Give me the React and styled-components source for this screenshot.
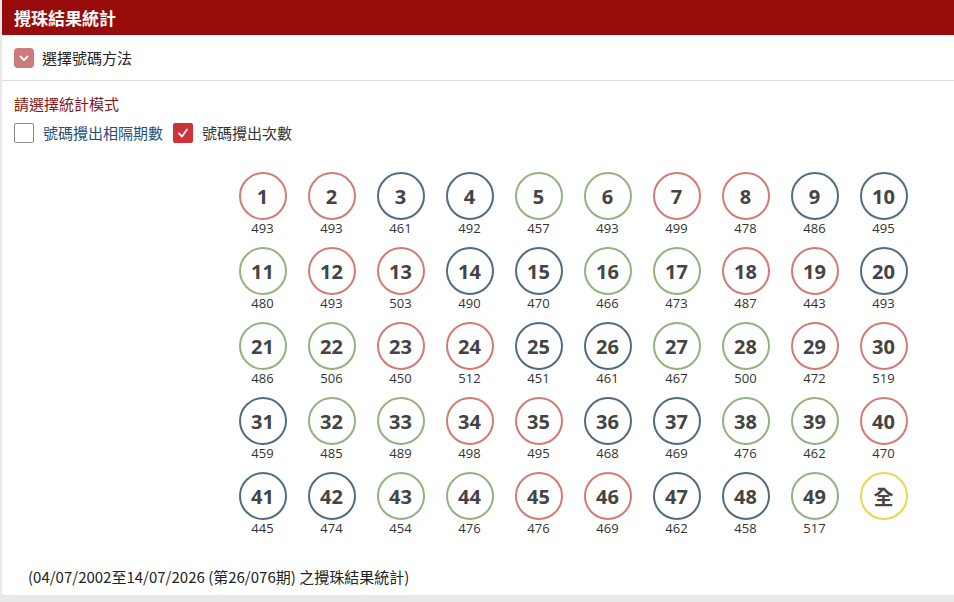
import React from "react";
import styled, { createGlobalStyle } from "styled-components";

const Global = createGlobalStyle`
  html, body { margin: 0; padding: 0; background: #e9e9e9; }
  body { font-family: "Noto Sans CJK TC", "Noto Sans", sans-serif; }
`;

const Card = styled.div`
  margin-left: 2px;
  width: 960px;
  height: 595px;
  background: #fff;
  border-radius: 0 0 4px 4px;
  display: flex;
  flex-direction: column;
  overflow: hidden;
`;

const Header = styled.div`
  height: 35px;
  background: #990c0c;
  color: #fff;
  font-size: 17px;
  font-weight: 700;
  display: flex;
  align-items: center;
  padding-left: 12px;
`;

const MethodRow = styled.div`
  height: 45px;
  display: flex;
  align-items: center;
  gap: 8px;
  padding-left: 12px;
  border-bottom: 1px solid #dedede;
  font-size: 15px;
  color: #222;
`;

const Toggle = styled.span`
  width: 20px;
  height: 20px;
  border-radius: 4px;
  background: #cd7b7b;
  display: flex;
  align-items: center;
  justify-content: center;
`;

const ModeTitle = styled.div`
  margin-top: 13px;
  padding-left: 12px;
  font-size: 15px;
  color: #8b1414;
  line-height: 20px;
`;

const Options = styled.div`
  display: flex;
  align-items: center;
  padding-left: 12px;
  margin-top: 8px;
  gap: 10px;
`;

const Option = styled.label`
  display: flex;
  align-items: center;
  gap: 9px;
  font-size: 15px;
  color: ${(p) => (p.$checked ? "#333" : "#1f4f78")};
`;

const Box = styled.span`
  width: 18px;
  height: 18px;
  border-radius: 2px;
  border: 1px solid ${(p) => (p.$checked ? "#cf3238" : "#8a8a8a")};
  background: ${(p) => (p.$checked ? "#cf3238" : "#fff")};
  display: flex;
  align-items: center;
  justify-content: center;
`;

const Grid = styled.div`
  margin-top: 29px;
  padding-left: 226px;
  display: grid;
  grid-template-columns: repeat(10, 69px);
  row-gap: 11px;
`;

const Cell = styled.div`
  display: flex;
  flex-direction: column;
  align-items: center;
  height: 64px;
`;

const Ball = styled.div`
  width: 44px;
  height: 44px;
  border-radius: 50%;
  border: 2px solid ${(p) => p.$color};
  display: flex;
  align-items: center;
  justify-content: center;
  font-family: "Open Sans", "Noto Sans CJK TC", sans-serif;
  font-weight: 700;
  font-size: 20px;
  color: #444;
`;

const Count = styled.div`
  font-family: "Open Sans", sans-serif;
  font-size: 13px;
  color: #333;
  line-height: 16px;
`;

const Footer = styled.div`
  margin-top: auto;
  margin-bottom: 8px;
  padding-left: 26px;
  font-size: 15px;
  color: #222;
  line-height: 20px;
`;

const red = [1, 2, 7, 8, 12, 13, 18, 19, 23, 24, 29, 30, 34, 35, 40, 45, 46];
const blue = [3, 4, 9, 10, 14, 15, 20, 25, 26, 31, 36, 37, 41, 42, 47, 48];
const colorOf = (n) =>
  red.includes(n) ? "#d27a74" : blue.includes(n) ? "#4f6c80" : "#93b27e";

const counts = [
  493, 493, 461, 492, 457, 493, 499, 478, 486, 495,
  480, 493, 503, 490, 470, 466, 473, 487, 443, 493,
  486, 506, 450, 512, 451, 461, 467, 500, 472, 519,
  459, 485, 489, 498, 495, 468, 469, 476, 462, 470,
  445, 474, 454, 476, 476, 469, 462, 458, 517,
];

export default function App() {
  return (
    <>
      <Global />
      <Card>
        <Header>攪珠結果統計</Header>
        <MethodRow>
          <Toggle>
            <svg width="12" height="12" viewBox="0 0 12 12">
              <path d="M2.5 4.5 L6 8 L9.5 4.5" fill="none" stroke="#fff" strokeWidth="1.8" strokeLinecap="round" strokeLinejoin="round" />
            </svg>
          </Toggle>
          選擇號碼方法
        </MethodRow>
        <ModeTitle>請選擇統計模式</ModeTitle>
        <Options>
          <Option>
            <Box />
            號碼攪出相隔期數
          </Option>
          <Option $checked>
            <Box $checked>
              <svg width="14" height="14" viewBox="0 0 14 14">
                <path d="M3 7.5 L6 10.5 L11 3.5" fill="none" stroke="#fff" strokeWidth="1.8" strokeLinecap="round" strokeLinejoin="round" />
              </svg>
            </Box>
            號碼攪出次數
          </Option>
        </Options>
        <Grid>
          {counts.map((c, i) => (
            <Cell key={i}>
              <Ball $color={colorOf(i + 1)}>{i + 1}</Ball>
              <Count>{c}</Count>
            </Cell>
          ))}
          <Cell>
            <Ball $color="#ecd54a">全</Ball>
          </Cell>
        </Grid>
        <Footer>(04/07/2002至14/07/2026 (第26/076期) 之攪珠結果統計)</Footer>
      </Card>
    </>
  );
}
